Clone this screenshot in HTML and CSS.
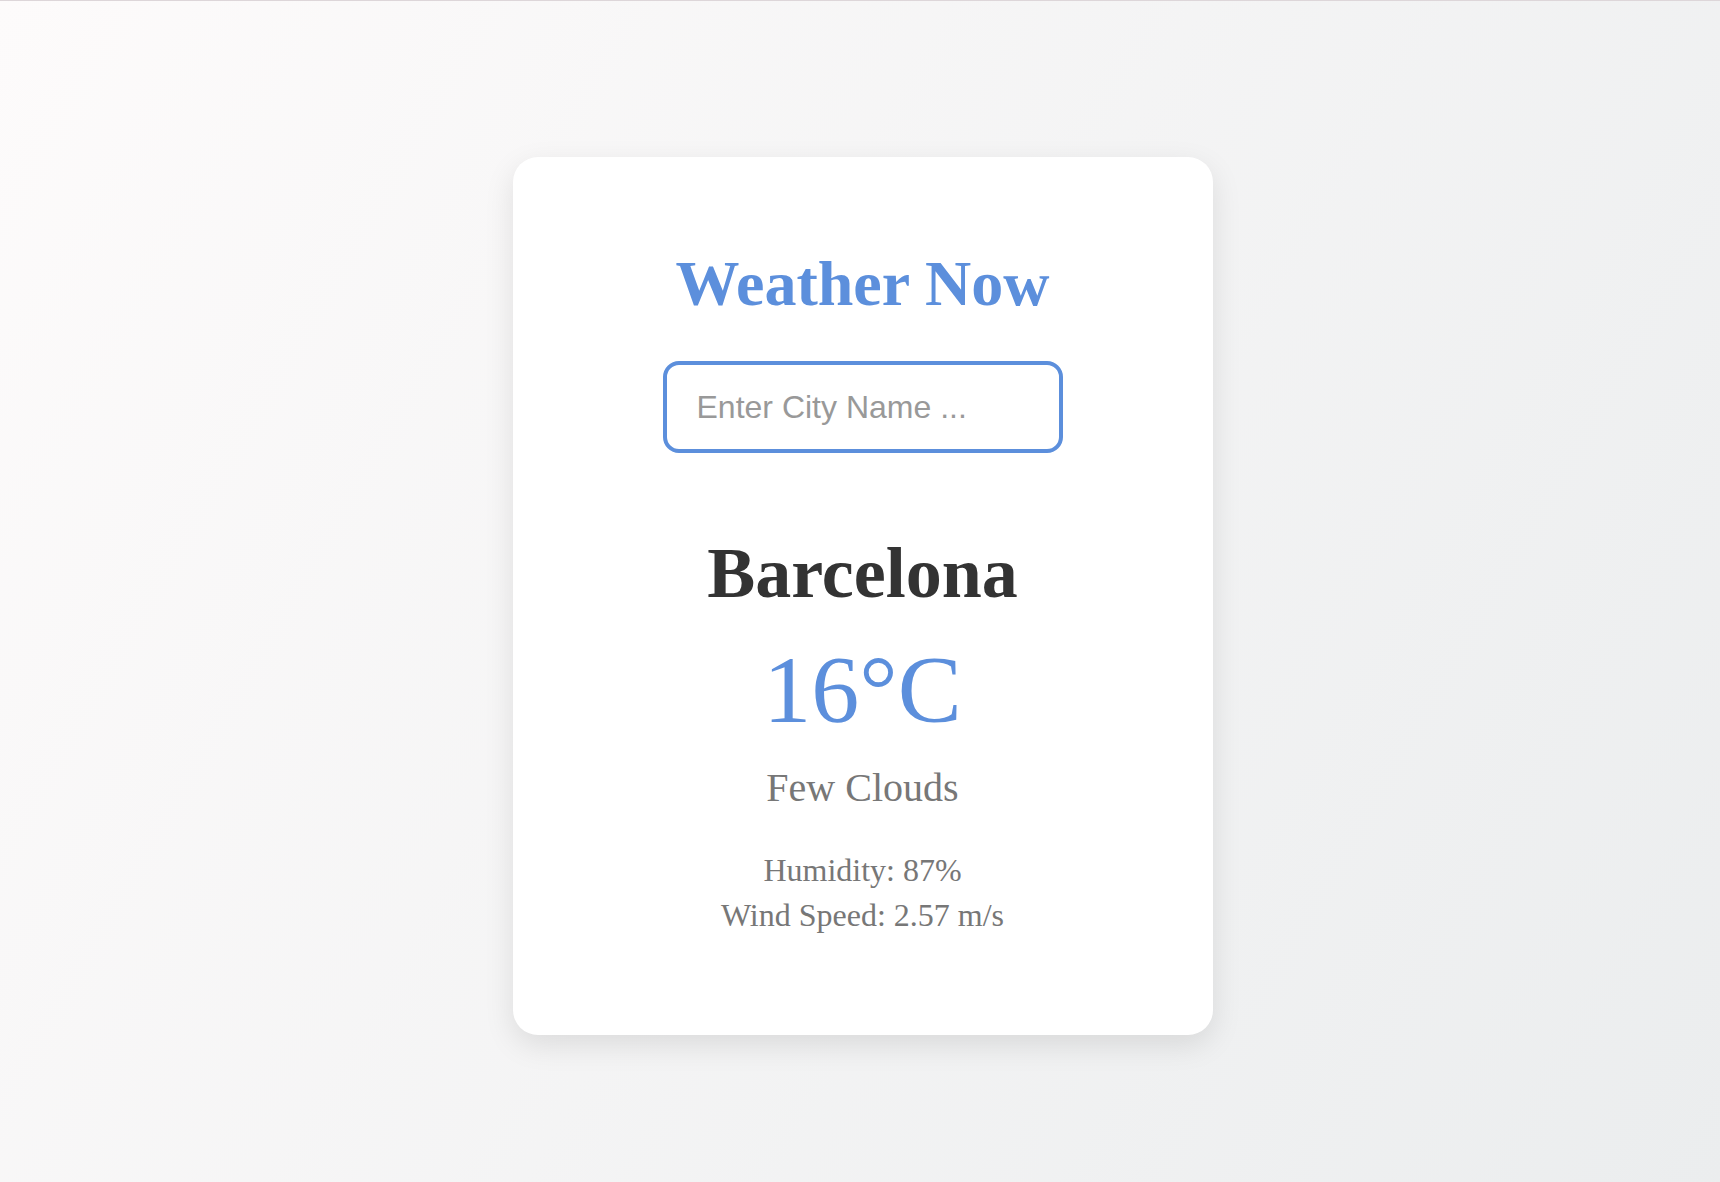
FILE: index.html
```html
<!DOCTYPE html>
<html lang="en">
<head>
<meta charset="utf-8">
<title>Weather Now</title>
<link rel="stylesheet" href="styles.css">
</head>
<body>
  <main class="card">
    <h1 class="title">Weather Now</h1>
    <input class="city-input" type="text" placeholder="Enter City Name ...">
    <section class="weather">
      <h2 class="city">Barcelona</h2>
      <div class="temp">16°C</div>
      <p class="desc">Few Clouds</p>
      <div class="details">
        <p class="detail">Humidity: 87%</p>
        <p class="detail">Wind Speed: 2.57 m/s</p>
      </div>
    </section>
  </main>
</body>
</html>
```

FILE: styles.css
```css
html {
  margin: 0;
  border-top: 1px solid #ddd6d9;
  background: linear-gradient(120deg, #fdfbfb 0%, #ebedee 100%);
  min-height: 100%;
}

body {
  margin: 0;
  min-height: 1181px;
  box-sizing: border-box;
  padding: 9px 0 0 5px;
  display: flex;
  justify-content: center;
  align-items: center;
  font-family: "Liberation Serif", "Times New Roman", serif;
}

.card {
  width: 700px;
  box-sizing: border-box;
  background: #ffffff;
  border-radius: 25px;
  box-shadow: 0 10px 30px rgba(0, 0, 0, 0.1);
  padding: 95px 40px 97px;
  display: flex;
  flex-direction: column;
  align-items: center;
  text-align: center;
}

.title {
  margin: 0;
  font-size: 64px;
  line-height: 64px;
  font-weight: bold;
  color: #5c8fdc;
}

.city-input {
  margin: 45px 0 0;
  width: 400px;
  height: 92px;
  box-sizing: border-box;
  border: 4px solid #5c8fdc;
  border-radius: 16px;
  padding: 0 30px;
  font-family: "Liberation Sans", Arial, sans-serif;
  font-size: 32px;
  color: #333;
  background: #fff;
  outline: none;
}

.city-input::placeholder {
  color: #999999;
}

.weather {
  margin-top: 84px;
  display: flex;
  flex-direction: column;
  align-items: center;
}

.city {
  margin: 0;
  font-size: 72px;
  line-height: 72px;
  font-weight: bold;
  color: #333333;
}

.temp {
  margin-top: 33px;
  font-size: 96px;
  line-height: 96px;
  color: #5c8fdc;
}

.desc {
  margin: 30px 0 0;
  font-size: 40px;
  line-height: 40px;
  color: #777777;
}

.details {
  margin-top: 40px;
}

.detail {
  margin: 0;
  font-size: 32px;
  line-height: 44.8px;
  color: #777777;
}
```
